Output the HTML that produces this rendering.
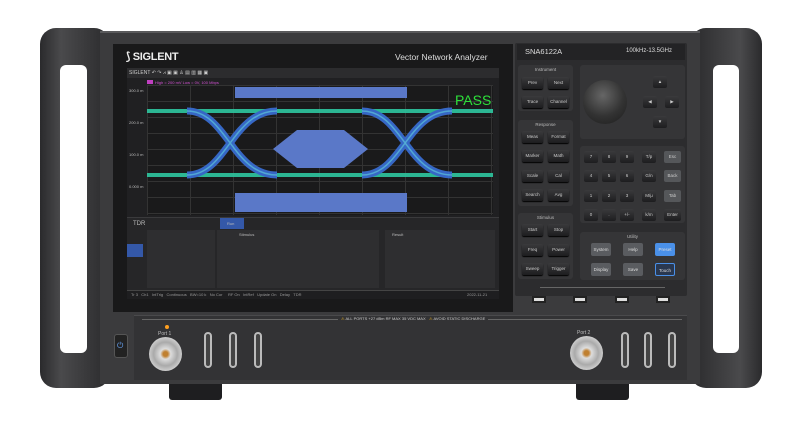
<!DOCTYPE html>
<html><head><style>
*{margin:0;padding:0;box-sizing:border-box}
body{width:798px;height:435px;background:#fff;position:relative;overflow:hidden;font-family:"Liberation Sans",sans-serif}
.a{position:absolute}
.btn{position:absolute;width:21px;height:12px;background:linear-gradient(#3a3a3c,#1d1d1f);border-radius:2px;color:#ccc;font-size:4.5px;text-align:center;line-height:12px;box-shadow:0 1px 1px #000}
.grp{position:absolute;background:#353537;border-radius:3px}
.gl{position:absolute;color:#bbb;font-size:4.5px;width:100%;text-align:center}
.key{position:absolute;width:14px;height:12px;background:linear-gradient(#3a3a3c,#1d1d1f);border-radius:2px;color:#ccc;font-size:4.5px;text-align:center;line-height:12px}
.ub{position:absolute;width:20px;height:13px;background:#5a5c60;border-radius:2px;color:#ddd;font-size:4.5px;text-align:center;line-height:13px}
.usb{position:absolute;width:14px;height:7px;background:#ddd;border:2px solid #222}
.t{position:absolute;color:#bbb;font-size:4px;white-space:nowrap}
</style></head><body>
<div class="a" style="left:40px;top:28px;width:70px;height:360px;background:linear-gradient(90deg,#2a2a2c,#4a4a4c 30%,#2a2a2c);border-radius:16px"></div>
<div class="a" style="left:60px;top:65px;width:27px;height:288px;background:#fff;border-radius:6px"></div>
<div class="a" style="left:690px;top:28px;width:72px;height:360px;background:linear-gradient(90deg,#2a2a2c,#4a4a4c 70%,#2a2a2c);border-radius:16px"></div>
<div class="a" style="left:713px;top:65px;width:26px;height:288px;background:#fff;border-radius:6px"></div>
<div class="a" style="left:169px;top:382px;width:53px;height:18px;background:#1e1e20;border-radius:0 0 3px 3px"></div>
<div class="a" style="left:576px;top:382px;width:53px;height:18px;background:#1e1e20;border-radius:0 0 3px 3px"></div>
<div class="a" style="left:100px;top:31px;width:600px;height:353px;background:#3b3b3d;border-top:2px solid #5a5a5c"></div>
<div class="a" style="left:113px;top:44px;width:400px;height:268px;background:#19191a"></div>
<div class="a" style="left:126px;top:50px;color:#eee;font-size:11px;font-weight:bold;letter-spacing:-0.3px">⟆ SIGLENT</div>
<div class="a" style="left:395px;top:52px;color:#ddd;font-size:8.5px">Vector Network Analyzer</div>
<div class="a" style="left:127px;top:68px;width:372px;height:231px;background:#202022">
 <div class="a" style="left:0;top:0;width:372px;height:10px;background:#2c2c2e"></div>
 <div class="t" style="left:2px;top:2px;font-size:5px;color:#ccc">SIGLENT ↶ ↷ ⩘ ▣ ▣ ♙ ▤ ▥ ▦ ▣</div>
 <div class="a" style="left:20px;top:12px;width:6px;height:4px;background:#c040c0"></div>
 <div class="t" style="left:28px;top:12px;color:#d050d0">High = 200 mV Low = 0V, 100 Mbps</div>
 <div class="a" style="left:20px;top:17px;width:346px;height:130px;background:#1a1a1b;background-image:linear-gradient(#333 1px,transparent 1px),linear-gradient(90deg,#333 1px,transparent 1px);background-size:100% 16px,43px 100%"></div>
 <div class="a" style="left:108px;top:19px;width:172px;height:11px;background:#5a78c8"></div>
 <div class="a" style="left:108px;top:125px;width:172px;height:19px;background:#5a78c8"></div>
 <svg class="a" style="left:20px;top:17px" width="346" height="130">
  <polygon points="126,64 150,45 197,45 221,64 197,83 150,83" fill="#5a78c8"/>
  <g fill="none" opacity=".9">
   <path d="M0,26 L346,26" stroke="#2ec7a0" stroke-width="4"/>
   <path d="M0,90 L346,90" stroke="#2ec7a0" stroke-width="4"/>
   <path d="M40,90 C80,90 85,26 130,26 M40,26 C80,26 85,90 130,90" stroke="#3a70d8" stroke-width="7"/>
   <path d="M215,90 C255,90 260,26 305,26 M215,26 C255,26 260,90 305,90" stroke="#3a70d8" stroke-width="7"/>
   <path d="M40,90 C80,90 85,26 130,26 M40,26 C80,26 85,90 130,90 M215,90 C255,90 260,26 305,26 M215,26 C255,26 260,90 305,90" stroke="#58b8e8" stroke-width="1.5"/>
  </g>
  <text x="308" y="20" fill="#2de03a" font-size="14" font-family="Liberation Sans">PASS</text>
 </svg>
 <div class="t" style="left:2px;top:20px">300.0 m</div><div class="t" style="left:2px;top:52px">200.0 m</div><div class="t" style="left:2px;top:84px">100.0 m</div><div class="t" style="left:2px;top:116px">0.000 m</div>
 <div class="a" style="left:0;top:149px;width:372px;height:73px;background:#262628;border-top:1px solid #3a3a3c"></div>
 <div class="a" style="left:93px;top:150px;width:24px;height:11px;background:#3458a8"></div>
 <div class="t" style="left:6px;top:153px;font-size:6px">TDR</div>
 <div class="t" style="left:100px;top:153px">Run</div>
 <div class="a" style="left:0;top:176px;width:16px;height:13px;background:#3458a8"></div>
 <div class="a" style="left:20px;top:162px;width:68px;height:58px;background:#2e2e30"></div>
 <div class="a" style="left:90px;top:162px;width:162px;height:58px;background:#2e2e30"></div>
 <div class="a" style="left:258px;top:162px;width:110px;height:58px;background:#2e2e30"></div>
 <div class="t" style="left:112px;top:164px">Stimulus</div><div class="t" style="left:265px;top:164px">Result</div>
 <div class="a" style="left:0;top:222px;width:372px;height:9px;background:#1e1e20;border-top:1px solid #444"></div>
 <div class="t" style="left:4px;top:224px;color:#999">Tr 3 &nbsp; Ch1 &nbsp; IntTrig &nbsp; Continuous &nbsp; BW=10 k &nbsp; No Cor &nbsp; &nbsp; RF On &nbsp; IntRef &nbsp; Update On &nbsp; Delay &nbsp; TDR</div>
 <div class="t" style="left:340px;top:224px;color:#999">2022-11-21</div>
</div>
<div class="a" style="left:515px;top:43px;width:172px;height:253px;background:#2c2c2e;border-radius:2px"></div>
<div class="a" style="left:517px;top:44px;width:168px;height:16px;background:#232325"></div>
<div class="a" style="left:525px;top:47px;color:#ddd;font-size:7.5px">SNA6122A</div>
<div class="a" style="left:626px;top:48px;color:#ddd;font-size:6px">100kHz-13.5GHz</div>
<div class="grp" style="left:518px;top:65px;width:55px;height:46px"><div class="gl" style="top:2px">Instrument</div></div>
<div class="grp" style="left:518px;top:120px;width:55px;height:86px"><div class="gl" style="top:2px">Response</div></div>
<div class="grp" style="left:518px;top:213px;width:55px;height:66px"><div class="gl" style="top:2px">Stimulus</div></div>
<div class="grp" style="left:580px;top:65px;width:105px;height:74px"></div>
<div class="grp" style="left:580px;top:146px;width:105px;height:77px"></div>
<div class="grp" style="left:580px;top:232px;width:105px;height:48px"><div class="gl" style="top:2px">Utility</div></div>
<div class="btn" style="left:522px;top:77px">Prev</div><div class="btn" style="left:548px;top:77px">Next</div>
<div class="btn" style="left:522px;top:96px">Trace</div><div class="btn" style="left:548px;top:96px">Channel</div>
<div class="btn" style="left:522px;top:131px">Meas</div><div class="btn" style="left:548px;top:131px">Format</div>
<div class="btn" style="left:522px;top:150px">Marker</div><div class="btn" style="left:548px;top:150px">Math</div>
<div class="btn" style="left:522px;top:170px">Scale</div><div class="btn" style="left:548px;top:170px">Cal</div>
<div class="btn" style="left:522px;top:189px">Search</div><div class="btn" style="left:548px;top:189px">Avg</div>
<div class="btn" style="left:522px;top:224px">Start</div><div class="btn" style="left:548px;top:224px">Stop</div>
<div class="btn" style="left:522px;top:244px">Freq</div><div class="btn" style="left:548px;top:244px">Power</div>
<div class="btn" style="left:522px;top:263px">Sweep</div><div class="btn" style="left:548px;top:263px">Trigger</div>
<div class="a" style="left:583px;top:80px;width:44px;height:44px;border-radius:50%;background:radial-gradient(circle at 45% 35%,#666,#333 55%,#1c1c1c)"></div>
<div class="key" style="left:653px;top:76px">▲</div><div class="key" style="left:643px;top:96px">◀</div><div class="key" style="left:665px;top:96px">▶</div><div class="key" style="left:653px;top:116px">▼</div>
<div class="key" style="left:584px;top:151px">7</div><div class="key" style="left:602px;top:151px">8</div><div class="key" style="left:620px;top:151px">9</div><div class="key" style="left:642px;top:151px">T/p</div><div class="key" style="left:664px;top:151px;width:17px;background:#55575a">Esc</div>
<div class="key" style="left:584px;top:170px">4</div><div class="key" style="left:602px;top:170px">5</div><div class="key" style="left:620px;top:170px">6</div><div class="key" style="left:642px;top:170px">G/n</div><div class="key" style="left:664px;top:170px;width:17px;background:#55575a">Back</div>
<div class="key" style="left:584px;top:190px">1</div><div class="key" style="left:602px;top:190px">2</div><div class="key" style="left:620px;top:190px">3</div><div class="key" style="left:642px;top:190px">M/μ</div><div class="key" style="left:664px;top:190px;width:17px;background:#55575a">Tab</div>
<div class="key" style="left:584px;top:209px">0</div><div class="key" style="left:602px;top:209px">.</div><div class="key" style="left:620px;top:209px">+/-</div><div class="key" style="left:642px;top:209px">k/m</div><div class="key" style="left:664px;top:209px;width:17px">Enter</div>
<div class="ub" style="left:591px;top:243px">System</div><div class="ub" style="left:623px;top:243px">Help</div><div class="ub" style="left:655px;top:243px;background:#4a90e8">Preset</div>
<div class="ub" style="left:591px;top:263px">Display</div><div class="ub" style="left:623px;top:263px">Save</div><div class="ub" style="left:655px;top:263px;background:#2a3850;border:1px solid #4a90e8">Touch</div>
<div class="a" style="left:540px;top:287px;width:125px;height:1px;background:#666"></div>
<div class="usb" style="left:532px;top:296px"></div><div class="usb" style="left:573px;top:296px"></div><div class="usb" style="left:615px;top:296px"></div><div class="usb" style="left:656px;top:296px"></div>
<div class="a" style="left:134px;top:315px;width:553px;height:65px;background:#333335;border-top:1px solid #4a4a4c"></div>
<div class="a" style="left:142px;top:319px;width:540px;height:1px;background:#666"></div>
<div class="t" style="left:338px;top:316px;background:#333335;padding:0 3px;color:#ccc"><span style="color:#e8b020">⚠</span> ALL PORTS +27 dBm RF MAX 35 VDC MAX &nbsp; <span style="color:#e8b020">⚠</span> AVOID STATIC DISCHARGE</div>
<div class="a" style="left:114px;top:334px;width:14px;height:24px;background:#222;border-radius:3px;border:1px solid #555"></div>
<div class="a" style="left:117px;top:341px;color:#6aa8ff;font-size:8px">⏻</div>
<div class="a" style="left:165px;top:325px;width:4px;height:4px;border-radius:50%;background:#ffa020"></div>
<div class="t" style="left:158px;top:331px;font-size:5px">Port 1</div>
<div class="t" style="left:577px;top:330px;font-size:5px">Port 2</div>
<div class="a" style="left:149px;top:337px;width:33px;height:34px;border-radius:50%;background:radial-gradient(circle,#c08030 10%,#ddd 22%,#aaa 50%,#ccc 70%,#666)"></div>
<div class="a" style="left:570px;top:336px;width:33px;height:34px;border-radius:50%;background:radial-gradient(circle,#c08030 10%,#ddd 22%,#aaa 50%,#ccc 70%,#666)"></div>
<svg class="a" style="left:200px;top:325px" width="70" height="50"><g stroke="#bbb" stroke-width="2" fill="#444"><rect x="5" y="8" width="6" height="34" rx="3"/><rect x="30" y="8" width="6" height="34" rx="3"/><rect x="55" y="8" width="6" height="34" rx="3"/></g></svg>
<svg class="a" style="left:617px;top:325px" width="70" height="50"><g stroke="#bbb" stroke-width="2" fill="#444"><rect x="5" y="8" width="6" height="34" rx="3"/><rect x="28" y="8" width="6" height="34" rx="3"/><rect x="52" y="8" width="6" height="34" rx="3"/></g></svg>
</body></html>
